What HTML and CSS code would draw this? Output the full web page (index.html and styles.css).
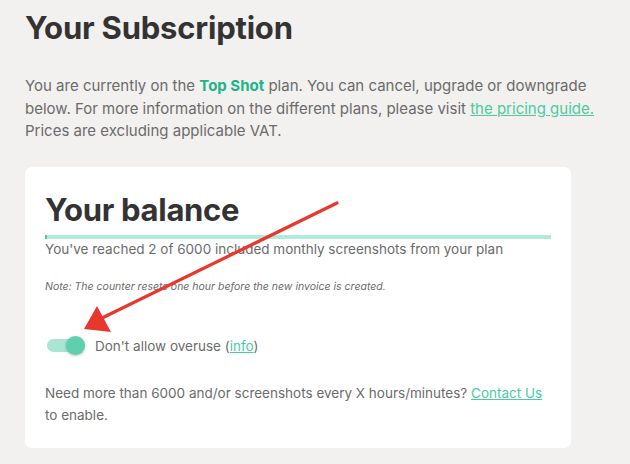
FILE: index.html
```html
<!DOCTYPE html>
<html lang="en">
<head>
    <meta charset="UTF-8">
    <meta name="viewport" content="width=device-width, initial-scale=1.0">
    <title>Your Subscription</title>
    <link rel="stylesheet" href="styles.css">
</head>
<body>
    <div class="page">
        <h1>Your Subscription</h1>
        <p class="intro">
            You are currently on the <strong class="plan">Top Shot</strong> plan. You can cancel, upgrade or downgrade
            below. For more information on the different plans, please visit <a href="#">the pricing guide.</a>
            Prices are excluding applicable VAT.
        </p>

        <div class="card">
            <h2>Your balance</h2>
            <div class="usage-bar"><div class="usage-fill" style="width: 0.4%"></div></div>
            <p class="usage-text">You've reached 2 of 6000 included monthly screenshots from your plan</p>
            <p class="note">Note: The counter resets one hour before the new invoice is created.</p>

            <label class="toggle-row">
                <span class="toggle"><span class="knob"></span></span>
                <span>Don't allow overuse (<a href="#">info</a>)</span>
            </label>

            <p class="contact">Need more than 6000 and/or screenshots every X hours/minutes? <a href="#">Contact Us</a> to enable.</p>
        </div>
    </div>

    <!-- annotation arrow -->
    <svg class="arrow" width="630" height="464" viewBox="0 0 630 464">
        <line x1="337" y1="203" x2="100" y2="319" stroke="#e8382d" stroke-width="3.2" stroke-linecap="round"/>
        <polygon points="84,329 97,306 111,332" fill="#e8382d"/>
    </svg>
</body>
</html>
```

FILE: styles.css
```css
* {
    margin: 0;
    padding: 0;
    box-sizing: border-box;
}
body {
    background: #f2f1ef;
    font-family: Inter, "Liberation Sans", sans-serif;
    color: #6b6b6b;
}
a {
    color: #4ccaa3;
    text-decoration: underline;
}
.page {
    padding: 6px 12px 0 25px;
}
h1 {
    font-size: 31px;
    font-weight: 700;
    color: #333;
    line-height: 44px;
    letter-spacing: -0.2px;
}
.intro {
    margin-top: 25px;
    font-size: 15px;
    line-height: 22.5px;
}
.plan {
    color: #1cb489;
    font-weight: 700;
}
.card {
    margin-top: 24px;
    width: 546px;
    background: #fff;
    border-radius: 7px;
    padding: 23px 20px 22px;
}
h2 {
    font-size: 31px;
    font-weight: 700;
    color: #333;
    line-height: 40px;
    letter-spacing: -0.3px;
}
.usage-bar {
    margin-top: 5px;
    height: 4px;
    background: #b0ebd9;
}
.usage-fill {
    height: 100%;
    background: #4ccaa3;
}
.usage-text {
    font-size: 13.5px;
    line-height: 20px;
}
.note {
    margin-top: 21px;
    font-size: 10.5px;
    font-style: italic;
    line-height: 14px;
}
.toggle-row {
    margin-top: 42px;
    display: flex;
    align-items: center;
    gap: 12px;
    font-size: 13.5px;
    line-height: 20px;
}
.toggle {
    position: relative;
    width: 36px;
    height: 13px;
    margin-left: 2px;
    border-radius: 7px;
    background: #a9e5d2;
}
.knob {
    position: absolute;
    right: -2px;
    top: -3px;
    width: 19px;
    height: 19px;
    border-radius: 50%;
    background: #5fcfae;
    box-shadow: 0 1px 3px rgba(0, 0, 0, 0.25);
}
.contact {
    margin-top: 26px;
    font-size: 13.5px;
    line-height: 22px;
}
.arrow {
    position: absolute;
    left: 0;
    top: 0;
    pointer-events: none;
}
```
